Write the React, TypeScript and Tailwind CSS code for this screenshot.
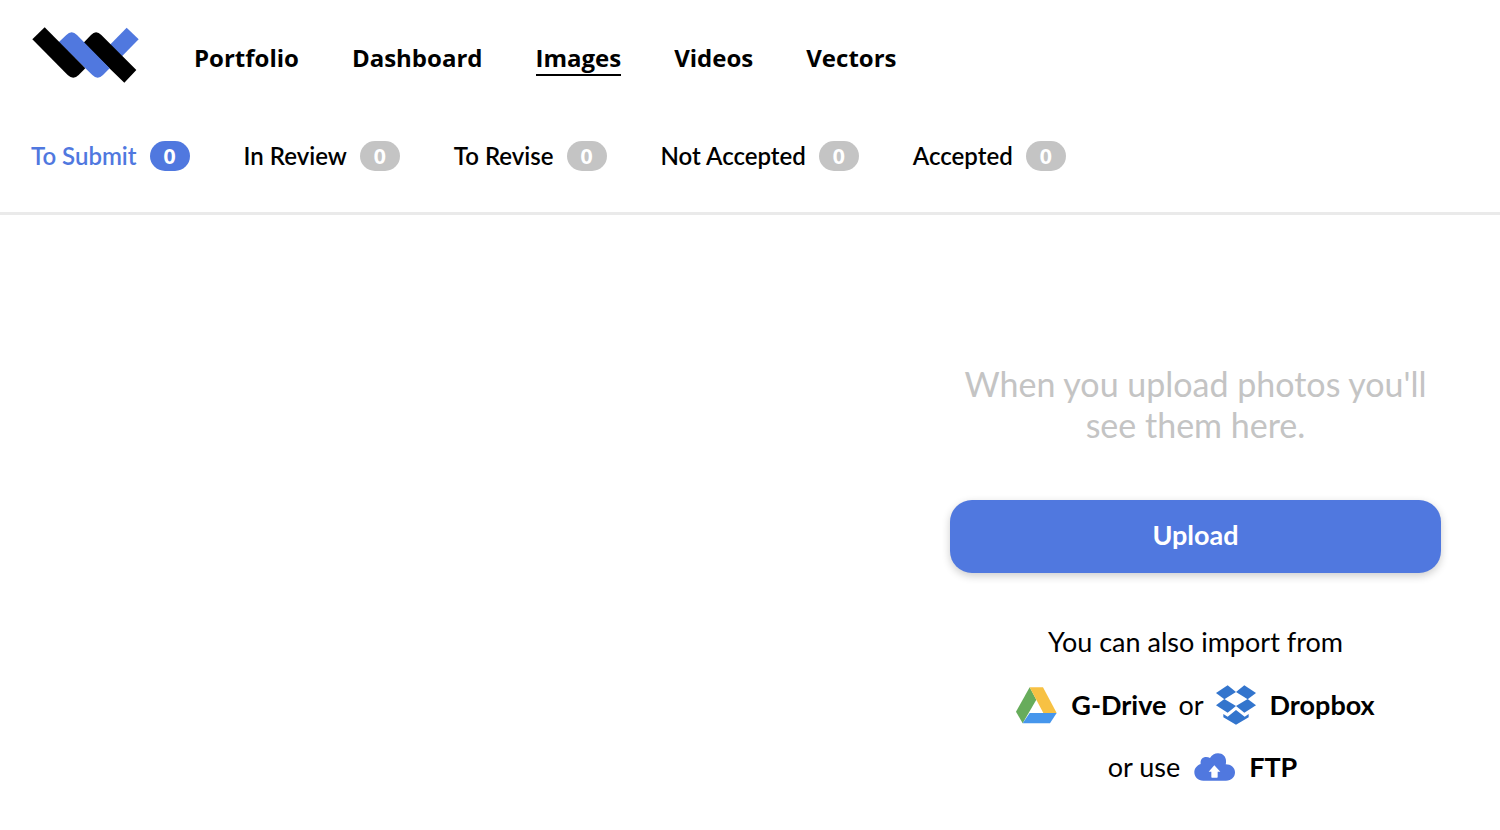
import React from 'react'

const navItems = ['Portfolio', 'Dashboard', 'Images', 'Videos', 'Vectors']

const tabs = [
    { label: 'To Submit', count: 0 },
    { label: 'In Review', count: 0 },
    { label: 'To Revise', count: 0 },
    { label: 'Not Accepted', count: 0 },
    { label: 'Accepted', count: 0 },
]

function Logo() {
    return (
        <svg viewBox="36 36 324 168" className="w-[108px] h-14" aria-hidden="true">
            <path d="M320 38L356 73L306 124L270 89Z" fill="#5078df" />
            <path d="M190 84L213 60Q228 44 244 60L349 165L313 203Z" fill="#000" />
            <path d="M116 82L139 60Q155 44 171 60L269 160L249 180Q233 196 217 180Z" fill="#5078df" />
            <path d="M37 73L74 37L196 160L176 180Q160 196 143 180Z" fill="#000" />
        </svg>
    )
}

function DriveIcon() {
    return (
        <svg viewBox="50 50 123 111" className="w-[41px] h-[37px]" aria-hidden="true">
            <path d="M91 51L50 124L70 159L111 88Z" fill="#67ac5b" />
            <path d="M91 51H131L172 128H132Z" fill="#f7c143" />
            <path d="M91 128H172L152 159H70Z" fill="#4696ec" />
        </svg>
    )
}

function DropboxIcon() {
    return (
        <svg viewBox="645 46 120 120" className="w-10 h-10" aria-hidden="true">
            <g fill="#3375cd">
                <path d="M680 47L705 67L670 89L645 70Z" />
                <path d="M730 47L765 70L740 89L705 67Z" />
                <path d="M670 88L705 109L680 129L645 107Z" />
                <path d="M740 88L765 107L730 129L705 109Z" />
                <path d="M705 121L731 141L743 133V143L705 165L667 143V133L680 141Z" />
            </g>
        </svg>
    )
}

function CloudIcon() {
    return (
        <svg viewBox="582 250 123 84" className="w-[41px] h-7" aria-hidden="true">
            <path
                d="M610 333C594 333 583 322 583 308C583 296 591 287 602 283C600 270 608 262 618 262C623 262 627 263 630 265C635 256 644 251 654 251C669 251 679 262 678 276C678 279 678 281 677 284C693 284 705 294 705 308C705 323 694 333 678 333Z"
                fill="#5078df"
            />
            <path d="M643 287L661 306H653V322Q653 324 651 324H636Q634 324 634 322V306H626Z" fill="#fff" />
        </svg>
    )
}

export default function App() {
    return (
        <div className="min-h-screen bg-white font-['Lato','Open_Sans',sans-serif] text-black">
            <header className="border-b-3 border-[#eaeaea]">
                <nav className="flex items-center px-8 pt-[27px]">
                    <a href="#home" aria-label="Home">
                        <Logo />
                    </a>
                    <div className="flex gap-[53px] pl-[54px] pt-2 font-['Open_Sans',sans-serif] text-2xl font-bold">
                        {navItems.map((item) => (
                            <a
                                key={item}
                                href={`#${item.toLowerCase()}`}
                                className={item === 'Images' ? 'border-b-2 border-black leading-8' : 'leading-8'}
                            >
                                {item}
                            </a>
                        ))}
                    </div>
                </nav>
                <div className="flex gap-[54px] px-[31px] pt-[57px] pb-10">
                    {tabs.map((tab, index) => (
                        <button
                            key={tab.label}
                            type="button"
                            className={`flex items-center gap-[13px] text-2xl leading-8 font-semibold ${index === 0 ? 'text-[#5078df]' : ''}`}
                        >
                            {tab.label}
                            <span
                                className={`flex h-[30px] w-10 items-center justify-center rounded-full text-xl font-extrabold text-white ${index === 0 ? 'bg-[#5078df]' : 'bg-[#c4c4c4]'}`}
                            >
                                {tab.count}
                            </span>
                        </button>
                    ))}
                </div>
            </header>

            <main className="flex justify-end px-[59px] pt-[148px] pb-10">
                <section className="w-full max-w-[491px] text-center">
                    <p className="px-2 text-[34px] leading-[41px] text-[#c4c4c4]">
                        When you upload photos you'll see them here.
                    </p>
                    <button
                        type="button"
                        className="mt-[55px] h-[73px] w-full rounded-[22px] bg-[#5078df] pb-0.5 text-[27px] font-bold text-white shadow-[0_3px_8px_rgba(0,0,0,0.2)]"
                    >
                        Upload
                    </button>
                    <p className="mt-[53px] text-[27px] leading-8">You can also import from</p>
                    <div className="mt-[27px] flex items-center justify-center gap-3 text-[27px] leading-10">
                        <a href="#gdrive" className="flex items-center gap-3.5 font-bold">
                            <DriveIcon />
                            G-Drive
                        </a>
                        or
                        <a href="#dropbox" className="flex items-center gap-3.5 font-bold">
                            <DropboxIcon />
                            Dropbox
                        </a>
                    </div>
                    <div className="mt-[22px] flex items-center justify-center gap-3.5 pl-3.5 text-[27px] leading-10">
                        or use
                        <a href="#ftp" className="flex items-center gap-3.5 font-bold">
                            <CloudIcon />
                            FTP
                        </a>
                    </div>
                </section>
            </main>
        </div>
    )
}
